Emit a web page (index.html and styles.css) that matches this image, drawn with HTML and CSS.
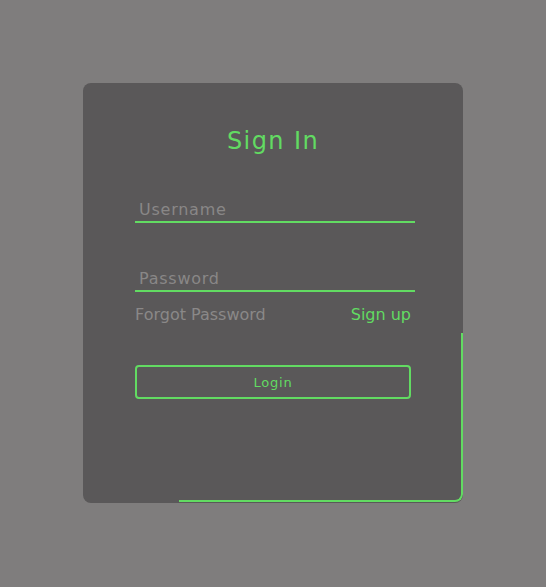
FILE: index.html
```html
<!DOCTYPE html>
<html lang="en">
<head>
<meta charset="utf-8">
<title>Sign In</title>
<link rel="stylesheet" href="styles.css">
</head>
<body>
  <div class="page">
    <div class="card">
      <span class="glow"></span>
      <form class="form">
        <h2 class="title">Sign In</h2>
        <input class="field" type="text" placeholder="Username">
        <input class="field field-gap" type="password" placeholder="Password">
        <div class="links">
          <a class="forgot" href="#">Forgot Password</a>
          <a class="signup" href="#">Sign up</a>
        </div>
        <button class="login" type="button">Login</button>
      </form>
    </div>
  </div>
</body>
</html>
```

FILE: styles.css
```css
* { box-sizing: border-box; }

html, body {
  margin: 0;
  padding: 0;
  background: #7f7d7d;
  font-family: "DejaVu Sans", Verdana, sans-serif;
}

.page {
  display: flex;
  justify-content: center;
  padding-top: 83px;
}

.card {
  position: relative;
  width: 380px;
  height: 420px;
  background: #5a5859;
  border-radius: 8px;
  overflow: hidden;
}

.glow {
  position: absolute;
  right: 0;
  bottom: 1px;
  width: 284px;
  height: 169px;
  border-right: 2px solid #62db62;
  border-bottom: 2px solid #62db62;
  border-bottom-right-radius: 8px;
  pointer-events: none;
}

.form {
  position: relative;
  display: flex;
  flex-direction: column;
  align-items: flex-start;
  padding: 44px 48px 0 52px;
}

.title {
  align-self: stretch;
  margin: 0 -48px 0 -52px;
  text-align: center;
  font-size: 24px;
  font-weight: normal;
  line-height: 28px;
  letter-spacing: 1.4px;
  color: #62db62;
}

.field {
  width: 280px;
  margin-top: 45px;
  padding: 0 0 3px 4px;
  border: none;
  border-bottom: 2px solid #62db62;
  background: transparent;
  font-family: "DejaVu Sans", Verdana, sans-serif;
  font-size: 16px;
  line-height: 18px;
  height: 23px;
  letter-spacing: 0.75px;
  color: #cfcfcf;
  outline: none;
}

.field-gap { margin-top: 46px; }

.field::placeholder { color: #898787; }

.links {
  width: 276px;
  margin-top: 13px;
  display: flex;
  justify-content: space-between;
  font-size: 16px;
  line-height: 19px;
}

.forgot, .signup { text-decoration: none; }
.forgot { color: #8a8888; }
.signup { color: #62db62; }

.login {
  width: 276px;
  height: 34px;
  margin-top: 41px;
  border: 2px solid #62db62;
  border-radius: 4px;
  background: transparent;
  font-family: "DejaVu Sans", Verdana, sans-serif;
  font-size: 13px;
  letter-spacing: 0.8px;
  color: #62db62;
  cursor: pointer;
}
```
